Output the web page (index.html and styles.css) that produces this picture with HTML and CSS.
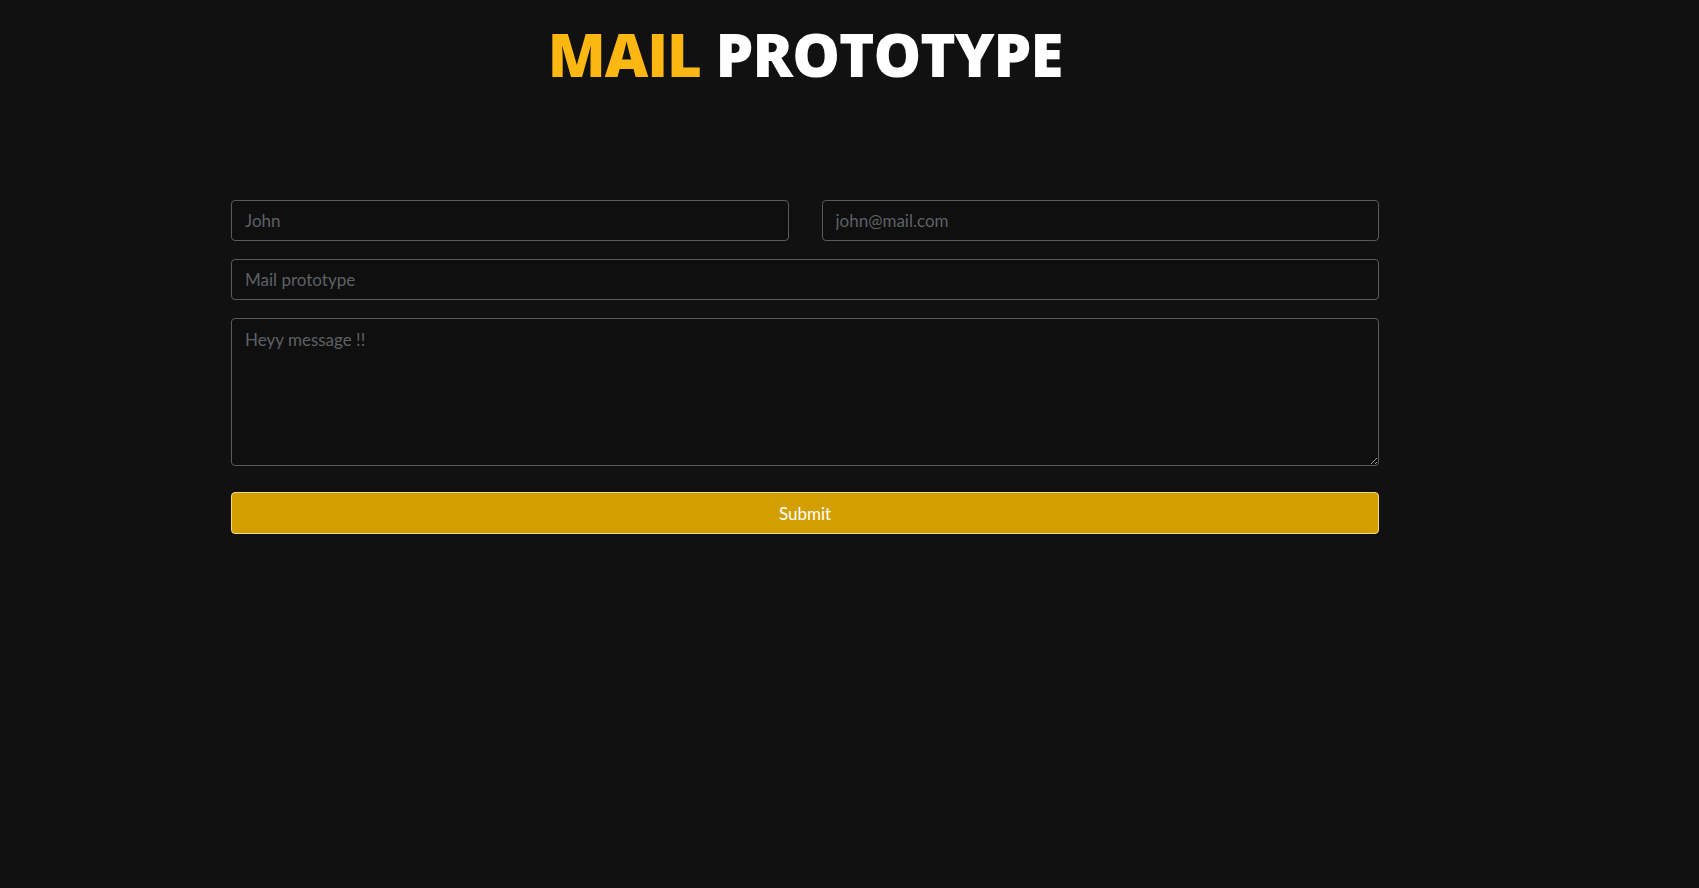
FILE: index.html
```html
<!DOCTYPE html>
<html lang="en">
<head>
<meta charset="utf-8">
<title>Mail Prototype</title>
<link rel="stylesheet" href="styles.css">
</head>
<body>
<main class="page">
  <h1 class="title"><span class="accent">MAIL</span> PROTOTYPE</h1>
  <form class="mail-form">
    <div class="row">
      <input class="field" type="text" placeholder="John">
      <input class="field" type="email" placeholder="john@mail.com">
    </div>
    <input class="field" type="text" placeholder="Mail prototype">
    <textarea class="field message" placeholder="Heyy message !!"></textarea>
    <button class="submit" type="button">Submit</button>
  </form>
</main>
</body>
</html>
```

FILE: styles.css
```css
* { box-sizing: border-box; }
html, body { margin: 0; background: #111111; }
body {
  font-family: "Open Sans", "Noto Sans", sans-serif;
  color: #fff;
  height: 888px;
}
.page {
  width: 1610px;
  padding-top: 14px;
}
.title {
  margin: 0;
  text-align: center;
  font-family: "Open Sans", sans-serif;
  font-weight: 800;
  font-size: 60px;
  line-height: 80px;
  letter-spacing: -1px;
  color: #ffffff;
}
.accent { color: #fcb712; }
.mail-form {
  width: 1148px;
  margin: 106px auto 0;
  display: flex;
  flex-direction: column;
  gap: 18px;
}
.row {
  display: flex;
  justify-content: space-between;
  gap: 33px;
}
.row .field { flex: 1; }
.field {
  height: 41px;
  background: #0f0f0f;
  border: 1px solid #5a5a5a;
  border-radius: 4px;
  padding: 0 13px;
  font-family: "Lato", "Open Sans", sans-serif;
  font-size: 17px;
  color: #cccccc;
  outline: none;
}
.field::placeholder { color: #5e6165; }
.message {
  height: 148px;
  padding: 10px 13px;
  resize: vertical;
}
.submit {
  margin-top: 8px;
  height: 42px;
  background: #d29e00;
  border: 1px solid #f2d98a;
  border-radius: 4px;
  color: #ffffff;
  font-family: "Lato", "Open Sans", sans-serif;
  font-size: 17px;
  cursor: pointer;
}
```
